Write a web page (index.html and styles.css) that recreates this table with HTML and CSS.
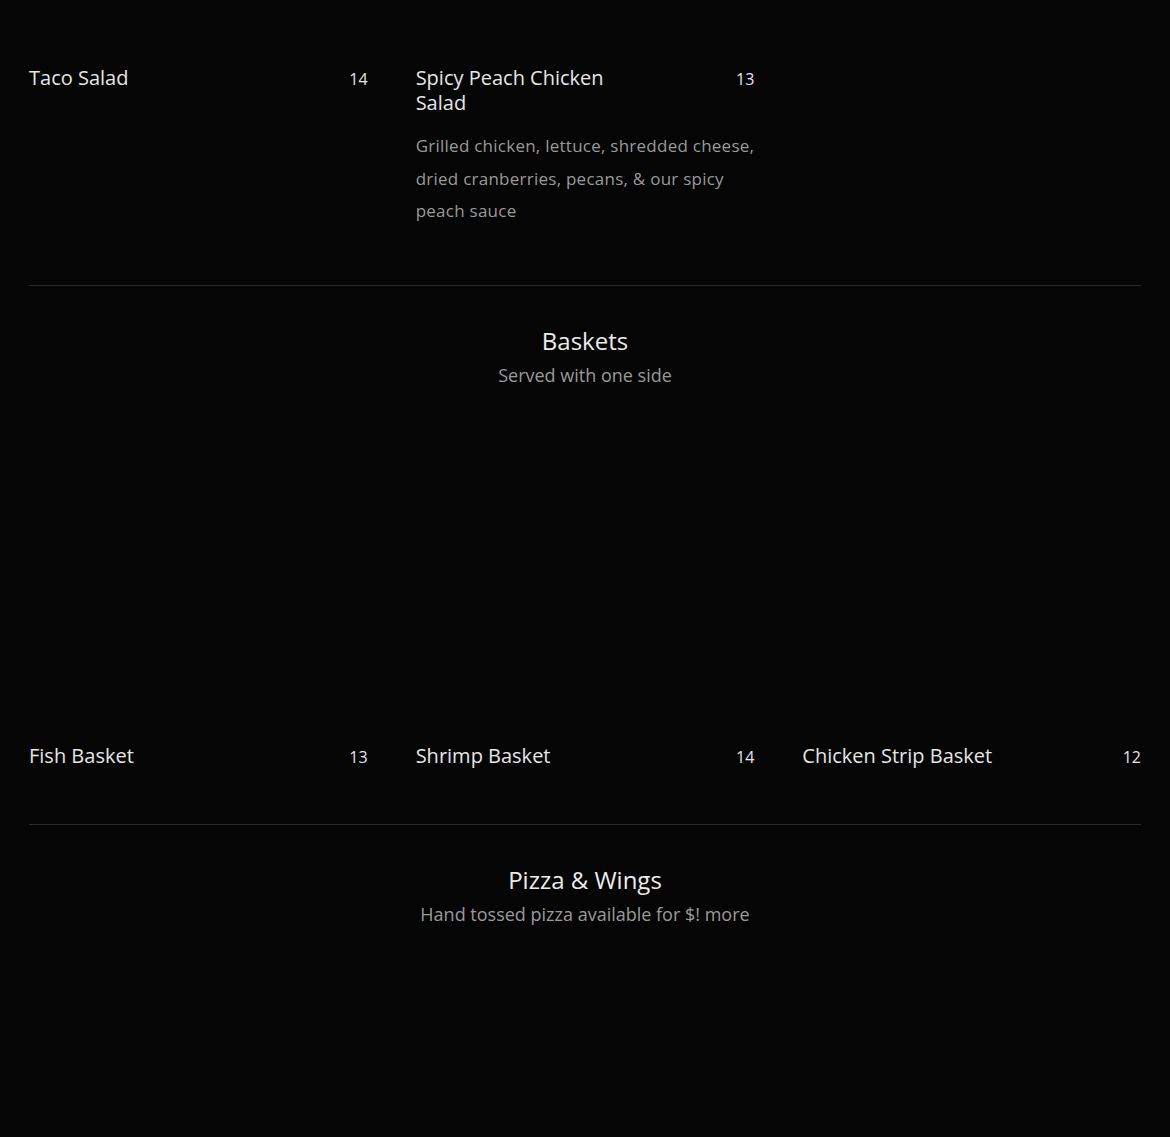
FILE: index.html
```html
<!DOCTYPE html>
<html lang="en">
<head>
    <meta charset="UTF-8">
    <meta name="viewport" content="width=device-width, initial-scale=1.0">
    <title>Menu</title>
    <link rel="stylesheet" href="styles.css">
</head>
<body>

    <main class="menu">

        <section class="menu-section first">
            <div class="items">
                <article class="item">
                    <div class="item-head">
                        <h3 class="item-name">Taco Salad</h3>
                        <span class="item-price">14</span>
                    </div>
                </article>
                <article class="item">
                    <div class="item-head">
                        <h3 class="item-name">Spicy Peach Chicken Salad</h3>
                        <span class="item-price">13</span>
                    </div>
                    <p class="item-desc">Grilled chicken, lettuce, shredded cheese, dried cranberries, pecans, &amp; our spicy peach sauce</p>
                </article>
            </div>
        </section>

        <section class="menu-section">
            <div class="section-head">
                <h2>Baskets</h2>
                <p>Served with one side</p>
            </div>
            <div class="items">
                <article class="item">
                    <div class="item-photo"></div>
                    <div class="item-head">
                        <h3 class="item-name">Fish Basket</h3>
                        <span class="item-price">13</span>
                    </div>
                </article>
                <article class="item">
                    <div class="item-photo"></div>
                    <div class="item-head">
                        <h3 class="item-name">Shrimp Basket</h3>
                        <span class="item-price">14</span>
                    </div>
                </article>
                <article class="item">
                    <div class="item-photo"></div>
                    <div class="item-head">
                        <h3 class="item-name">Chicken Strip Basket</h3>
                        <span class="item-price">12</span>
                    </div>
                </article>
            </div>
        </section>

        <section class="menu-section">
            <div class="section-head">
                <h2>Pizza &amp; Wings</h2>
                <p>Hand tossed pizza available for $! more</p>
            </div>
            <div class="items">
                <article class="item">
                    <div class="item-photo"></div>
                </article>
                <article class="item">
                    <div class="item-photo"></div>
                </article>
                <article class="item">
                    <div class="item-photo"></div>
                </article>
            </div>
        </section>

    </main>

</body>
</html>
```

FILE: styles.css
```css
/* dark menu page */
body {
    margin: 0;
    padding: 0;
    background-color: #050505;
    color: #e4e4e4;
    font-family: 'Open Sans', 'Liberation Sans', sans-serif;
}

.menu {
    max-width: 1112px;
    margin: 0 auto;
    padding-top: 65px;
}

.menu-section {
    padding: 0 0 53px;
    border-bottom: 1px solid #2a2a2a;
}

.menu-section.first {
    padding-bottom: 57px;
}

.menu-section + .menu-section {
    padding-top: 40px;
}

.menu-section:last-child {
    border-bottom: none;
}

.section-head {
    text-align: center;
    margin-bottom: 40px;
}

.section-head h2 {
    margin: 0;
    font-size: 24px;
    font-weight: 400;
    line-height: 30px;
    color: #ececec;
}

.section-head p {
    margin: 7px 0 0;
    font-size: 18px;
    line-height: 24px;
    color: #9a9a9a;
}

.items {
    display: grid;
    grid-template-columns: repeat(3, 1fr);
    column-gap: 48px;
}

.item-photo {
    height: 290px;
    margin-bottom: 26px;
}

.item-head {
    display: flex;
    justify-content: space-between;
    align-items: flex-start;
    gap: 16px;
}

.item-name {
    margin: 0;
    max-width: 230px;
    font-size: 20px;
    font-weight: 400;
    line-height: 25px;
    color: #e6e6e6;
}

.item-price {
    flex-shrink: 0;
    font-size: 16px;
    line-height: 28px;
    color: #e6e6e6;
}

.item-desc {
    margin: 15px 0 0;
    font-size: 17px;
    line-height: 32.5px;
    letter-spacing: 0.25px;
    color: #9a9a9a;
}
```
